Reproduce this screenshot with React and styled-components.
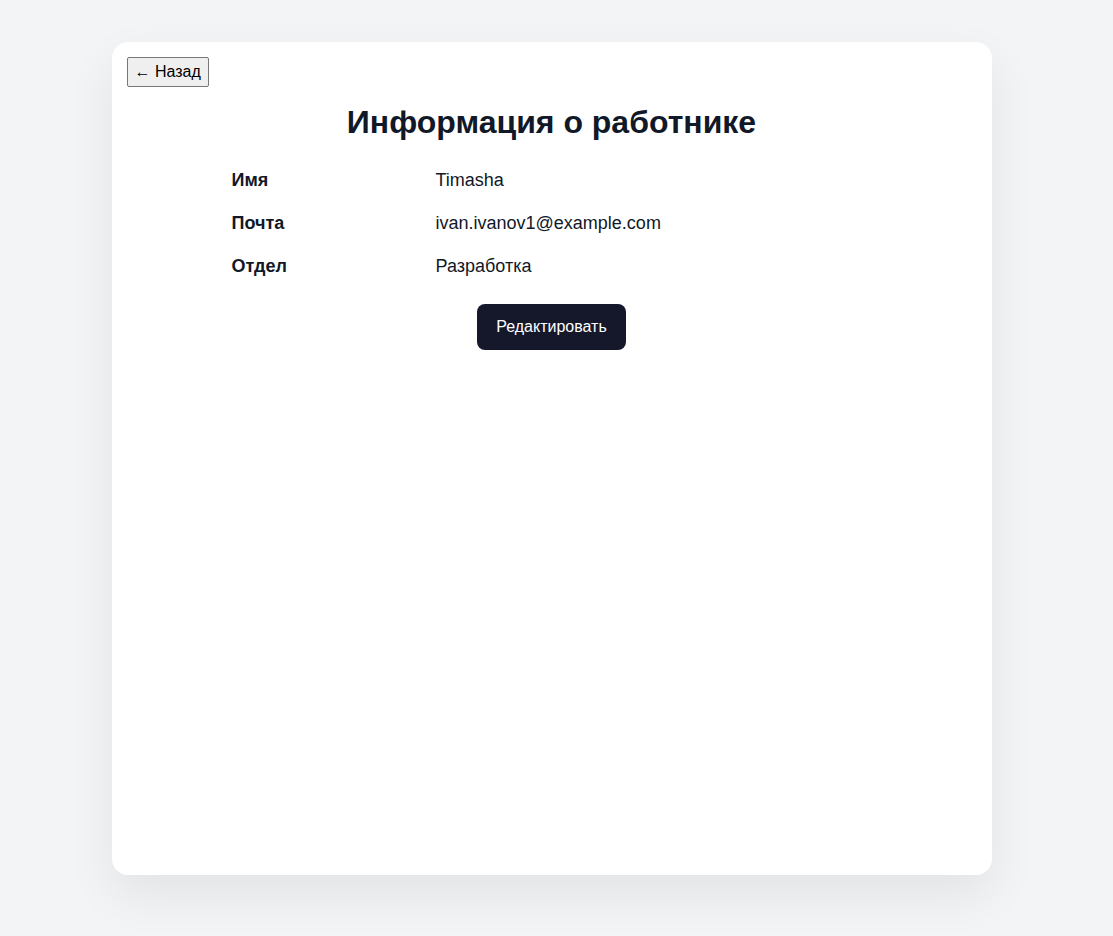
import React from "react";
import styled, { createGlobalStyle } from "styled-components";

const Global = createGlobalStyle`
  html, body { margin: 0; padding: 0; background: #f3f4f6; }
  body { font-family: "Liberation Sans", Arial, sans-serif; color: #111827; }
`;

const Page = styled.div`
  min-height: 936px;
  padding: 42px 10px 61px 0;
  box-sizing: border-box;
  display: flex;
  justify-content: center;
`;

const Card = styled.main`
  width: 880px;
  height: 833px;
  box-sizing: border-box;
  background: #fff;
  border-radius: 16px;
  box-shadow: 0 20px 50px rgba(0, 0, 0, 0.07);
  padding: 15px;
  display: flex;
  flex-direction: column;
`;

const BackButton = styled.button`
  align-self: flex-start;
  font-family: "Liberation Sans", Arial, sans-serif;
  font-size: 16px;
  color: #000;
  background: #efefef;
  border: 1px solid #767676;
  border-radius: 2px;
  padding: 5px 7px;
  height: 30px;
  cursor: pointer;
`;

const Title = styled.h1`
  margin: 16px 0 26px;
  text-align: center;
  font-size: 32px;
  line-height: 38px;
  font-weight: 700;
  color: #111827;
`;

const Details = styled.dl`
  width: 640px;
  margin: 0 auto;
  display: grid;
  grid-template-columns: 204px 1fr;
  row-gap: 16px;
`;

const Label = styled.dt`
  font-size: 18px;
  line-height: 27px;
  font-weight: 700;
`;

const Value = styled.dd`
  margin: 0;
  font-size: 18px;
  line-height: 27px;
`;

const EditButton = styled.button`
  align-self: center;
  margin-top: 24px;
  height: 46px;
  padding: 0 19px;
  border: none;
  border-radius: 8px;
  background: #15182b;
  color: #fff;
  font-family: "Liberation Sans", Arial, sans-serif;
  font-size: 16px;
  cursor: pointer;
`;

const rows = [
  ["Имя", "Timasha"],
  ["Почта", "ivan.ivanov1@example.com"],
  ["Отдел", "Разработка"],
];

export default function App() {
  return (
    <>
      <Global />
      <Page>
        <Card>
          <BackButton>← Назад</BackButton>
          <Title>Информация о работнике</Title>
          <Details>
            {rows.map(([k, v]) => (
              <React.Fragment key={k}>
                <Label>{k}</Label>
                <Value>{v}</Value>
              </React.Fragment>
            ))}
          </Details>
          <EditButton>Редактировать</EditButton>
        </Card>
      </Page>
    </>
  );
}
